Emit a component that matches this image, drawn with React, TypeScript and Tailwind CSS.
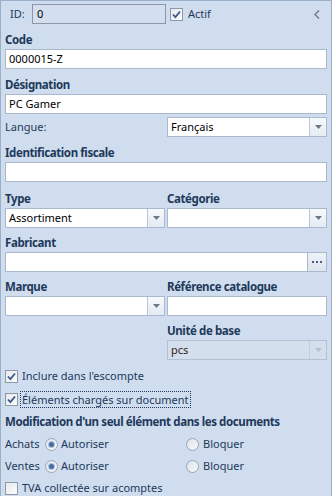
import React from "react";

const labelBase = "flex items-end pb-[4px] font-bold text-[11.5px] tracking-[-0.4px] text-[#1e395b] leading-none";

function TextBox({ value = "", className = "" }: { value?: string; className?: string }) {
  return (
    <div
      className={`h-[20px] bg-white border border-[#a9b8cc] flex items-center px-[3px] text-black ${className}`}
    >
      {value}
    </div>
  );
}

function Arrow({ disabled = false }: { disabled?: boolean }) {
  return (
    <svg width="7" height="4" viewBox="0 0 7 4">
      <path d="M0 0h7L3.5 4z" fill={disabled ? "#b5bfcc" : "#6b7685"} />
    </svg>
  );
}

function Combo({ value = "", disabled = false }: { value?: string; disabled?: boolean }) {
  return (
    <div
      className={`h-[20px] border flex ${
        disabled ? "bg-[#d4dfed] border-[#b3c1d3]" : "bg-white border-[#a9b8cc]"
      }`}
    >
      <div className={`flex-1 flex items-center px-[3px] ${disabled ? "text-[#3a2020]" : "text-black"}`}>
        {value}
      </div>
      <div
        className={`w-[17px] flex items-center justify-center border-l ${
          disabled ? "border-[#c2cedc] bg-[#d4dfed]" : "border-[#b9c6d8] bg-gradient-to-b from-[#f7f9fc] to-[#e4ebf4]"
        }`}
      >
        <Arrow disabled={disabled} />
      </div>
    </div>
  );
}

function Check({ checked = false }: { checked?: boolean }) {
  return (
    <div className="w-[13px] h-[13px] border border-[#8e98a6] bg-gradient-to-br from-[#e6e9ee] to-[#fbfcfd] flex items-center justify-center shrink-0">
      {checked && (
        <svg width="9" height="9" viewBox="0 0 9 9">
          <path d="M1 4.5l2.4 2.6L8 1.5" fill="none" stroke="#3b5a8a" strokeWidth="1.8" />
        </svg>
      )}
    </div>
  );
}

function Radio({ checked = false }: { checked?: boolean }) {
  return (
    <div className="w-[13px] h-[13px] rounded-full border border-[#9aa6b6] bg-gradient-to-br from-[#dde3ea] to-[#f8f9fb] flex items-center justify-center shrink-0">
      {checked && <div className="w-[5px] h-[5px] rounded-full bg-[#4a6ea0] ring-1 ring-[#a9c2e0]" />}
    </div>
  );
}

function RadioRow({ label }: { label: string }) {
  return (
    <div className="h-[22px] flex items-center">
      <div className="flex items-center w-[181px]">
        <span className="w-[40px]">{label}</span>
        <Radio checked />
        <span className="ml-[3px]">Autoriser</span>
      </div>
      <Radio />
      <span className="ml-[4px]">Bloquer</span>
    </div>
  );
}

export default function App() {
  return (
    <div
      className="w-[332px] h-[496px] bg-[#cfddee] border border-[#9aafc8] border-b-0 px-[4px] pt-[3px] text-[11px] text-[#1e395b] overflow-hidden"
      style={{ fontFamily: "'Noto Sans', 'Open Sans', sans-serif" }}
    >
      <div className="flex items-center h-[20px]">
        <span className="w-[27px] pl-[5px] text-[#1e395b]">ID:</span>
        <div className="w-[134px] h-[20px] border border-[#8c98aa] bg-[#d3dfee] flex items-center px-[4px] text-black">
          0
        </div>
        <div className="flex items-center ml-[4px] gap-[5px]">
          <Check checked />
          <span>Actif</span>
        </div>
        <svg className="ml-auto mr-[7px]" width="6" height="9" viewBox="0 0 6 9">
          <path d="M5 0.5L1 4.5l4 4" fill="none" stroke="#6e7b8c" strokeWidth="1.4" />
        </svg>
      </div>

      <div className={`h-[25px] ${labelBase}`}>Code</div>
      <TextBox value="0000015-Z" />

      <div className={`h-[25px] ${labelBase}`}>Désignation</div>
      <TextBox value="PC Gamer" />

      <div className="grid grid-cols-2 gap-[2px] mt-[3px]">
        <div className="flex items-center">Langue:</div>
        <Combo value="Français" />
      </div>

      <div className={`h-[25px] ${labelBase}`}>Identification fiscale</div>
      <TextBox />

      <div className="grid grid-cols-2 gap-x-[2px]">
        <div className={`h-[26px] ${labelBase}`}>Type</div>
        <div className={`h-[26px] ${labelBase}`}>Catégorie</div>
        <Combo value="Assortiment" />
        <Combo />
      </div>

      <div className={`h-[24px] ${labelBase}`}>Fabricant</div>
      <div className="h-[20px] border border-[#a9b8cc] flex bg-white">
        <div className="flex-1" />
        <div className="w-[19px] border-l border-[#a9b8cc] bg-gradient-to-b from-[#eef2f8] to-[#dde5f0] flex items-center justify-center gap-[2px]">
          <span className="w-[2px] h-[2px] bg-[#4b5d78]" />
          <span className="w-[2px] h-[2px] bg-[#4b5d78]" />
          <span className="w-[2px] h-[2px] bg-[#4b5d78]" />
        </div>
      </div>

      <div className="grid grid-cols-2 gap-x-[2px]">
        <div className={`h-[24px] ${labelBase}`}>Marque</div>
        <div className={`h-[24px] ${labelBase}`}>Référence catalogue</div>
        <Combo />
        <TextBox />
        <div />
        <div className={`h-[24px] ${labelBase}`}>Unité de base</div>
        <div />
        <Combo value="pcs" disabled />
      </div>

      <div className="mt-[5px] flex flex-col">
        <div className="h-[23px] flex items-center gap-[4px]">
          <Check checked />
          <span>Inclure dans l'escompte</span>
        </div>
        <div className="h-[23px] flex items-center gap-[2px]">
          <Check checked />
          <span className="border border-dotted border-[#1e395b] px-[1px] leading-[15px]">
            Éléments chargés sur document
          </span>
        </div>
        <div className="h-[22px] flex items-center font-bold text-[11.5px] tracking-[-0.4px]">
          Modification d'un seul élément dans les documents
        </div>
        <RadioRow label="Achats" />
        <RadioRow label="Ventes" />
        <div className="h-[23px] flex items-center gap-[4px]">
          <Check />
          <span>TVA collectée sur acomptes</span>
        </div>
      </div>
    </div>
  );
}
